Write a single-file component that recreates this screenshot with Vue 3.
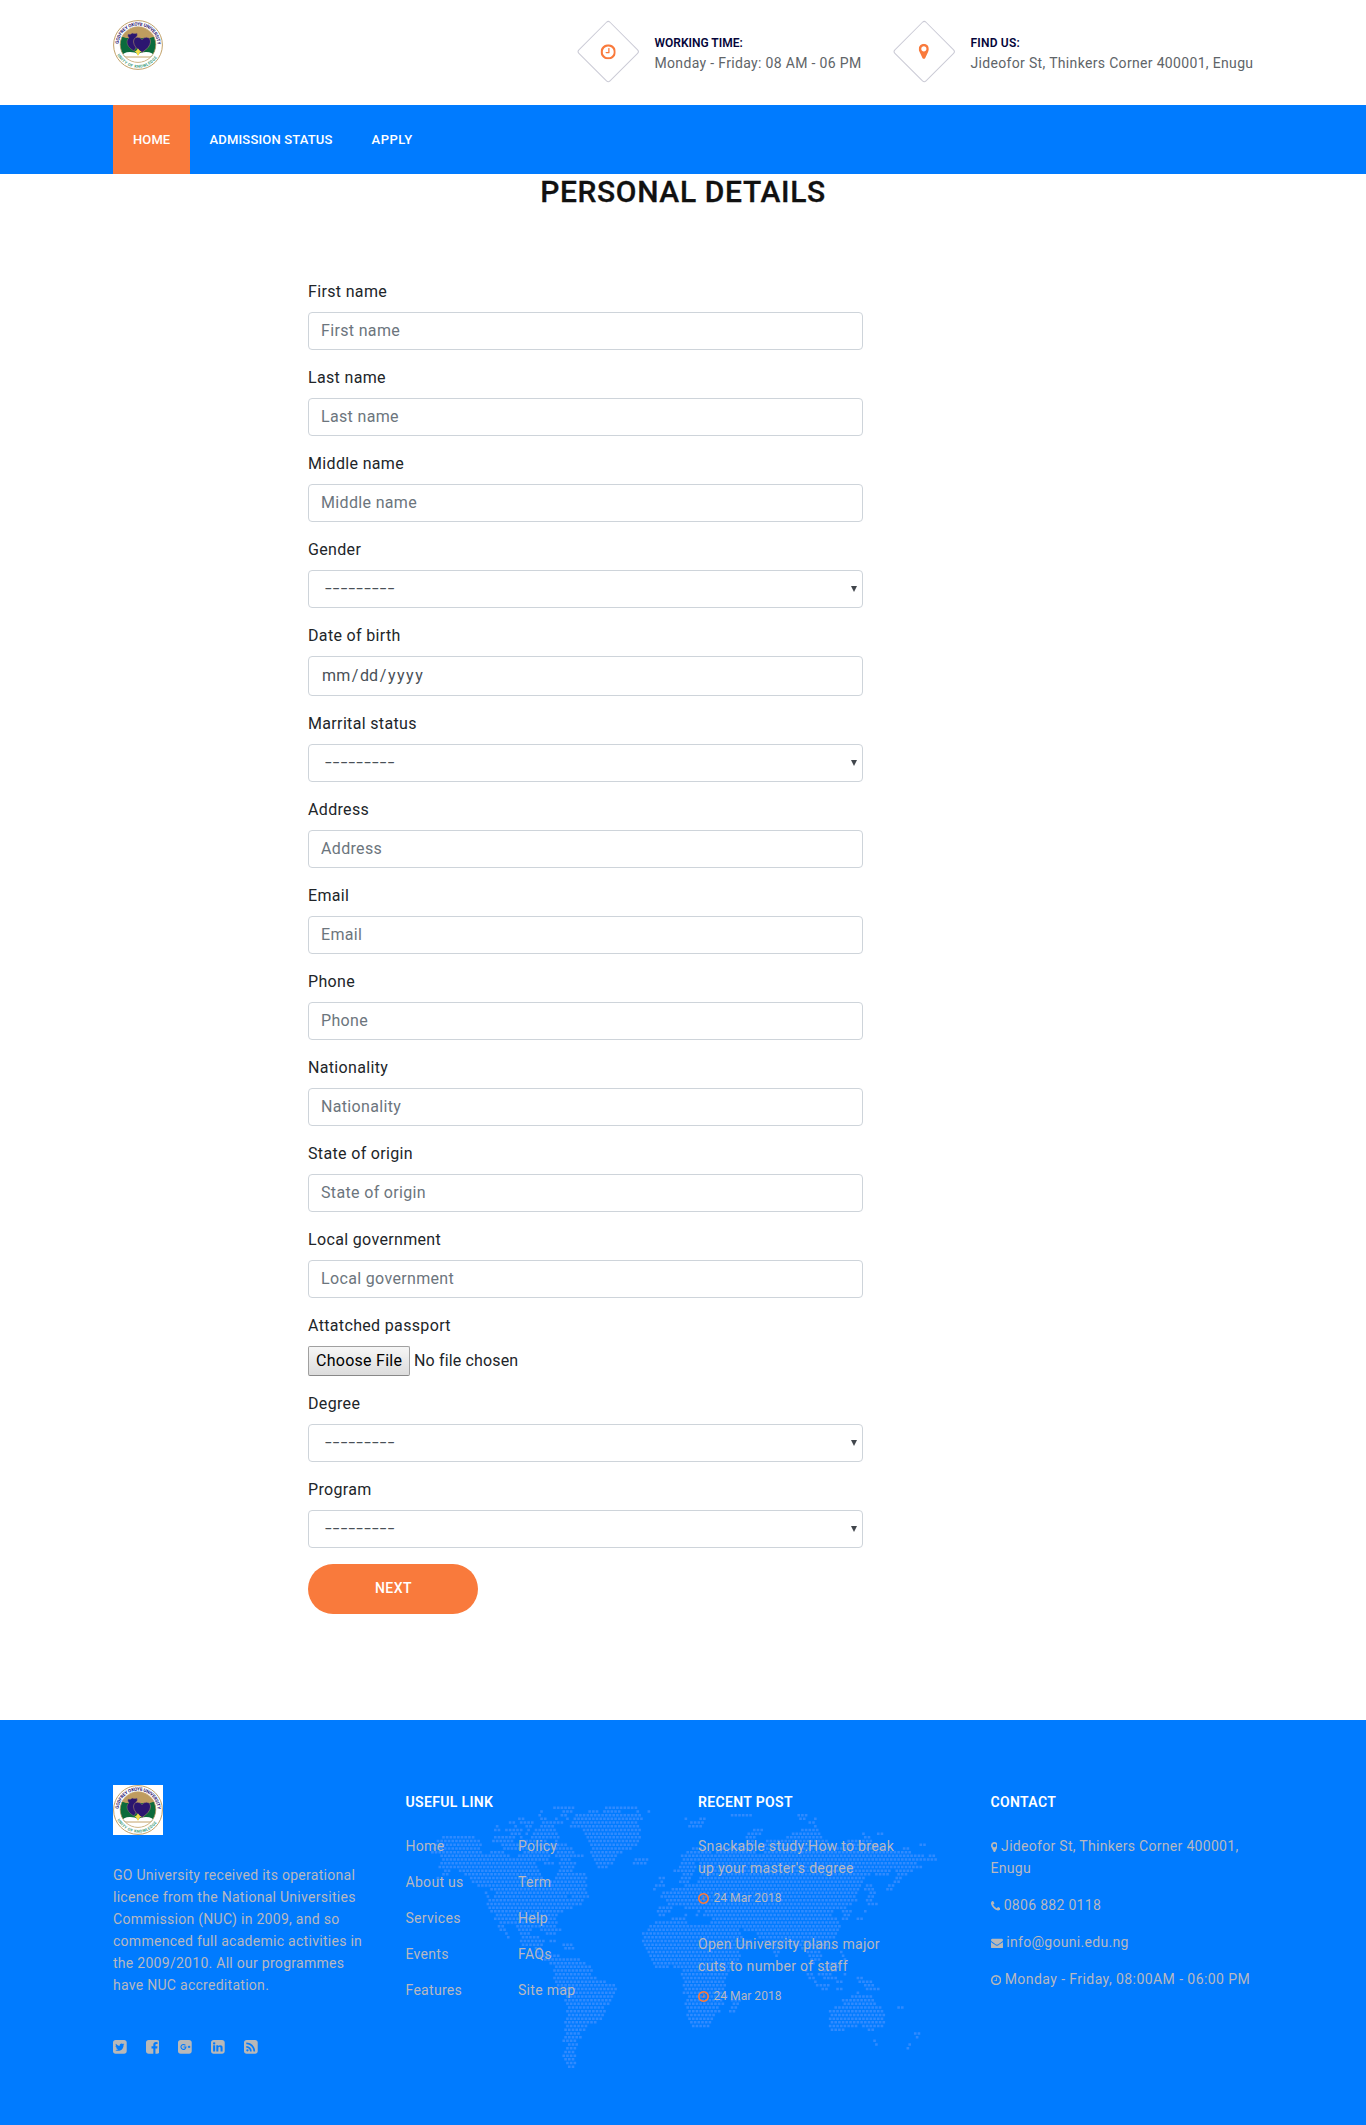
<script setup>
import { h } from 'vue'

const SQUARE = 'v960q0 119-84.5 203.5t-203.5 84.5h-960q-119 0-203.5-84.5t-84.5-203.5v-960q0-119 84.5-203.5t203.5-84.5h960q119 0 203.5 84.5t84.5 203.5z'
const icons = {
  clock: ['128 128 1536 1536', 'M1024 544v448q0 14-9 23t-23 9h-320q-14 0-23-9t-9-23v-64q0-14 9-23t23-9h224v-352q0-14 9-23t23-9h64q14 0 23 9t9 23zm416 352q0-148-73-273t-198-198-273-73-273 73-198 198-73 273 73 273 198 198 273 73 273-73 198-198 73-273zm224 0q0 209-103 385.5t-279.5 279.5-385.5 103-385.5-103-279.5-279.5-103-385.5 103-385.5 279.5-279.5 385.5-103 385.5 103 279.5 279.5 103 385.5z'],
  pin: ['384 128 1024 1536', 'M1152 640q0-106-75-181t-181-75-181 75-75 181 75 181 181 75 181-75 75-181zm256 0q0 109-33 179l-364 774q-16 33-47.5 52t-67.5 19-67.5-19-46.5-52l-365-774q-33-70-33-179 0-212 150-362t362-150 362 150 150 362z'],
  phone: ['192 128 1408 1536', 'M1600 1240q0 27-10 70.5t-21 68.5q-21 50-122 106-94 51-186 51-27 0-53-3.5t-57.5-12.5-47-14.5-55.5-20.5-49-18q-98-35-175-83-127-79-264-216t-216-264q-48-77-83-175-3-9-18-49t-20.5-55.5-14.5-47-12.5-57.5-3.5-53q0-92 51-186 56-101 106-122 25-11 68.5-21t70.5-10q14 0 21 3 18 6 53 76 11 19 30 54t35 63.5 31 53.5q3 4 17.5 25t21.5 35.5 7 28.5q0 20-28.5 50t-62 55-62 53-28.5 46q0 9 5 22.5t8.5 20.5 14 24 11.5 19q76 137 174 235t235 174q2 1 19 11.5t24 14 20.5 8.5 22.5 5q18 0 46-28.5t53-62 55-62 50-28.5q14 0 28.5 7t35.5 21.5 25 17.5q25 15 53.5 31t63.5 35 54 30q70 35 76 53 3 7 3 21z'],
  mail: ['0 128 1792 1536', 'M1792 710v794q0 66-47 113t-113 47h-1472q-66 0-113-47t-47-113v-794q44 49 101 87 362 246 497 345 57 42 92.5 65.5t94.5 48 110 24.5h2q51 0 110-24.5t94.5-48 92.5-65.5q170-123 498-345 57-39 100-87zm0-294q0 79-49 151t-122 123q-376 261-468 325-10 7-42.5 31t-54 38.5-52 32.5-57.5 27-50 9h-2q-23 0-50-9t-57.5-27-52-32.5-54-38.5-42.5-31q-91-64-262-182.5t-205-142.5q-62-42-117-115.5t-55-136.5q0-78 41.5-130t118.5-52h1472q65 0 112.5 47t47.5 113z'],
  twitter: ['128 128 1536 1536', 'M1408 610q-56 25-121 34 68-40 93-117-65 38-134 51-61-66-153-66-87 0-148.5 61.5t-61.5 148.5q0 29 5 48-129-7-242-65t-192-155q-29 50-29 106 0 114 91 175-47-1-100-26v2q0 75 50 133.5t123 72.5q-29 8-51 8-13 0-39-4 21 63 74.5 104t121.5 42q-116 90-261 90-26 0-50-3 148 94 322 94 112 0 210-35.5t168-95 120.5-137 75-162 24.5-168.5q0-18-1-27 63-45 105-109zm256-194' + SQUARE],
  facebook: ['128 128 1536 1536', 'M1376 128q119 0 203.5 84.5t84.5 203.5v960q0 119-84.5 203.5t-203.5 84.5h-188v-595h199l30-232h-229v-148q0-56 23.5-84t91.5-28l122-1v-207q-63-9-178-9-136 0-217.5 80t-81.5 226v171h-200v232h200v595h-532q-119 0-203.5-84.5t-84.5-203.5v-960q0-119 84.5-203.5t203.5-84.5h960z'],
  google: ['128 128 1536 1536', 'M1664 416' + SQUARE],
  linkedin: ['128 128 1536 1536', 'M365 1414h231v-694h-231v694zm246-908q-1-52-36-86t-93-34-94.5 34-36.5 86q0 51 35.5 85.5t92.5 34.5h1q59 0 95-34.5t36-85.5zm585 908h231v-398q0-154-73-233t-193-79q-136 0-209 117h2v-101h-231q3 66 0 694h231v-388q0-38 7-56 15-35 45-59.5t74-24.5q116 0 116 157v371zm468-998' + SQUARE],
  rss: ['128 128 1536 1536', 'M640 1280q0-53-37.5-90.5t-90.5-37.5-90.5 37.5-37.5 90.5 37.5 90.5 90.5 37.5 90.5-37.5 37.5-90.5zm351 94q-13-232-177-396t-396-177q-14-1-24 9t-10 23v128q0 13 8.5 22t21.5 10q154 11 264 121t121 264q1 13 10 21.5t22 8.5h128q13 0 23-10t9-24zm384 1q-5-154-56-297.5t-139.5-260-205-205-260-139.5-297.5-56q-14-1-23 9-10 10-10 23v128q0 13 9 22t22 10q204 7 378 111.5t278.5 278.5 111.5 378q1 13 10 22t22 9h128q13 0 23-10 11-9 9-23zm289-959' + SQUARE],
}

const Icon = ({ name }) => {
  const [viewBox, d] = icons[name]
  const kids = [h('path', { d, fill: 'currentColor' })]
  if (name === 'google') {
    kids.push(h('path', {
      d: 'M960 730a280 280 0 1 0 60 190h-270M1370 760v270M1235 895h270',
      fill: 'none', stroke: '#007bff', 'stroke-width': 120,
    }))
  }
  return h('svg', { viewBox, height: '.857em', width: Number(viewBox.split(' ')[2]) / 1792 + 'em' }, kids)
}

const Seal = () => h('svg', { viewBox: '0 0 50 50', width: 50, height: 50 }, [
  h('defs', [
    h('path', { id: 'sealTop', d: 'M5.6 25a19.4 19.4 0 0 1 38.8 0' }),
    h('path', { id: 'sealBottom', d: 'M2.7 30a22.9 22.9 0 0 0 44.6 0' }),
    h('clipPath', { id: 'sealClip' }, [h('circle', { cx: 25, cy: 24.6, r: 17.8 })]),
  ]),
  h('rect', { width: 50, height: 50, fill: '#fff' }),
  h('circle', { cx: 25, cy: 25, r: 24.4, fill: '#fff', stroke: '#c2a26a', 'stroke-width': 1 }),
  h('g', { 'clip-path': 'url(#sealClip)' }, [
    h('rect', { width: 50, height: 50, fill: '#bf9c5f' }),
    h('path', { d: 'M0 18q7-3 13 0h24q7-3 13 0v19H0z', fill: '#0b6b3c' }),
    h('path', { d: 'M8 37q2-5 9-5 5 0 8 2 3-2 8-2 7 0 9 5v13H8z', fill: '#fff' }),
    h('path', { d: 'M10 37h30', stroke: '#c2a26a', 'stroke-width': 1 }),
  ]),
  h('circle', { cx: 25, cy: 24.6, r: 17.8, fill: 'none', stroke: '#c2a26a', 'stroke-width': 0.7 }),
  h('path', { d: 'M21 31q-7-4-7-9 0-3 2-4-2-2-1-4 3 1 4-1 3 1 5 0 1 3-1 4 4 6-2 14z', fill: '#2c1670', stroke: '#a98a6a', 'stroke-width': 0.4 }),
  h('path', { d: 'M29 32.500q-8-5-8.500-10.500 0-4.500 4-4.800 3 0 4.500 2.400 1.500-2.400 4.500-2.400 4 .3 4 4.800-.5 5.500-8.500 10.500z', fill: '#2c1670', stroke: '#a98a6a', 'stroke-width': 0.6 }),
  h('path', { d: 'M21.500 31.500q2-.5 3.500-3 1.500 2.500 3.500 3l-2.500 1.800v2h-2v-2z', fill: '#f3dc4a' }),
  h('text', { fill: '#2c1670', 'font-size': 4.6, 'font-weight': 700, 'font-family': 'Roboto, sans-serif' },
    [h('textPath', { href: '#sealTop', textLength: 59, startOffset: 1 }, 'GODFREY OKOYE UNIVERSITY')]),
  h('text', { fill: '#3a9a78', 'font-size': 4, 'font-weight': 700, 'font-family': 'Roboto, sans-serif' },
    [h('textPath', { href: '#sealBottom', textLength: 48, startOffset: 5 }, 'UNITY OF KNOWLEDGE')]),
])

const fields = [
  { label: 'First name', type: 'text' },
  { label: 'Last name', type: 'text' },
  { label: 'Middle name', type: 'text' },
  { label: 'Gender', type: 'select' },
  { label: 'Date of birth', type: 'date' },
  { label: 'Marrital status', type: 'select' },
  { label: 'Address', type: 'text' },
  { label: 'Email', type: 'text' },
  { label: 'Phone', type: 'text' },
  { label: 'Nationality', type: 'text' },
  { label: 'State of origin', type: 'text' },
  { label: 'Local government', type: 'text' },
  { label: 'Attatched passport', type: 'file' },
  { label: 'Degree', type: 'select' },
  { label: 'Program', type: 'select' },
]

const links = [['Home', 'About us', 'Services', 'Events', 'Features'], ['Policy', 'Term', 'Help', 'FAQs', 'Site map']]
const posts = ["Snackable study:How to break up your master's degree", 'Open University plans major cuts to number of staff']
const contacts = [
  ['pin', 'Jideofor St, Thinkers Corner 400001, Enugu'],
  ['phone', '0806 882 0118'],
  ['mail', 'info@gouni.edu.ng'],
  ['clock', 'Monday - Friday, 08:00AM - 06:00 PM'],
]
const social = ['twitter', 'facebook', 'google', 'linkedin', 'rss']

// Dotted world map: one line per row of dots, each pair is a start-end span.
const land = `480-552 636-742
440-458 487-495 510-548 585-620 632-690 710-716 730-740 762-780
436-456 468-475 490-500 510-530 552-755 1022-1078 1090-1097 1218-1248
384-400 446-470 495-505 524-530 548-755 882-888 918-946 1222-1240 1268-1275
356-370 388-424 448-515 536-740 900-942 1250-1268
310-326 368-378 398-420 446-492 534-745 890-938 1262-1278
310-326 342-392 402-418 428-495 568-750 1088-1116 1226-1286
354-386 400-412 424-498 578-750 1072-1108 1205-1288 1408-1426 1452-1472
148-255 308-372 382-392 412-505 582-745 1062-1090 1178-1298 1418-1436
135-270 300-372 390-470 490-500 588-745 1062-1085 1125-1310 1370-1440
128-272 332-415 430-530 598-735 1030-1100 1120-1330 1345-1460 1586-1605
118-272 335-420 440-540 605-728 900-940 985-1085 1110-1480 1530-1550
122-272 295-345 400-470 495-548 598-690 880-965 975-1090 1120-1565
145-358 378-475 495-575 602-680 870-1600 1612-1632
150-475 505-545 610-672 725-775 870-945 955-1590 1595-1638
148-430 460-490 500-552 615-672 722-762 862-910 920-1575
142-445 502-550 622-655 862-912 925-1590
152-180 205-450 505-548 848-912 930-1500 1515-1565
148-175 215-452 500-580 868-905 925-1440 1455-1490 1515-1545
138-150 230-460 490-585 802-820 862-905 920-1420 1508-1530
235-585 806-820 865-900 920-1415 1505-1525
262-585 788-796 805-825 865-872 880-1410 1425-1440 1488-1515
300-585 782-790 812-822 840-1410 1420-1450 1486-1505
282-292 315-592 806-1400 1428-1450
280-300 310-530 538-600 810-1395 1425-1448
285-578 818-1395 1420-1440
288-570 825-1385 1430-1458
292-540 795-845 880-1370
300-520 798-835 915-925 935-1330 1350-1380 1418-1425
308-500 798-826 878-884 912-925 938-1325 1350-1375 1418-1425
312-500 834-886 960-1340 1350-1370 1395-1412
318-500 785-890 960-1345
322-340 372-500 772-1345
326-345 378-425 445-508 768-1040 1060-1345
335-352 388-420 460-500 755-1045 1095-1340
342-358 392-450 760-1055 1105-1330
388-460 470-495 752-1085 1120-1320
392-455 512-550 755-1080 1130-1175 1190-1310
425-455 522-550 760-1075 1135-1170 1230-1330
430-460 762-1050 1140-1165 1240-1290 1340-1360
440-505 768-1045 1150-1162 1250-1290 1345-1365
455-565 775-1040 1255-1285 1350-1365
470-588 780-1035 1245-1275 1300-1345
490-600 790-832 845-1020 1300-1340
488-605 870-1015 1235-1250 1295-1340
488-605 872-1010 1245-1265 1280-1320 1360-1370
488-612 878-1008 1250-1268 1290-1335 1345-1350 1390-1420
495-645 876-1005 1272-1280 1330-1352 1400-1448
500-675 878-1005 1275-1320 1412-1452
505-680 878-1005 1285-1315 1335-1360 1425-1470
515-678 878-1010 1390-1410
518-668 885-1010 1380-1445
522-658 882-1000 1015-1045 1352-1450
525-655 882-1000 1018-1045 1350-1455
528-645 880-985 1012-1040 1325-1470 1518-1538
528-645 888-985 1015-1035 1312-1475
528-635 888-975 1312-1478
524-630 892-968 1312-1482
522-615 895-965 1312-1482
520-595 902-955 1310-1395 1410-1475
520-580 1318-1365 1430-1455
518-570 1440-1448 1568-1585
516-568 1568-1585
516-560 1445-1460
532-560 1452-1458 1548-1565
526-555 1540-1560
518-555
516-558
514-550
520-558
526-556`
const STEP = 3.7
const mapPath = land.split('\n').map((row, k) => {
  const shift = (k % 2) * STEP / 2
  return row.split(' ').map((span) => {
    const [a, b] = span.split('-').map((n) => n / 3 - 30)
    let d = ''
    for (let i = Math.ceil((a - shift) / STEP); i * STEP + shift < b; i++) {
      d += `M${(i * STEP + shift).toFixed(2)} ${(k * STEP + 0.5).toFixed(2)}h2.6v2.500h-2.6z`
    }
    return d
  }).join('')
}).join('')
</script>

<template>
  <div class="page">
    <header class="top container">
      <a class="logo"><Seal /></a>
      <div class="info">
        <div class="info-item first">
          <span class="diamond"><i><Icon name="clock" /></i></span>
          <div class="info-text"><b class="wt">WORKING TIME:</b><span>Monday - Friday: 08 AM - 06 PM</span></div>
        </div>
        <div class="info-item">
          <span class="diamond"><i><Icon name="pin" /></i></span>
          <div class="info-text"><b>FIND US:</b><span>Jideofor St, Thinkers Corner 400001, Enugu</span></div>
        </div>
      </div>
    </header>

    <nav class="nav">
      <div class="container nav-row">
        <a class="active">HOME</a>
        <a class="status">ADMISSION STATUS</a>
        <a class="apply">APPLY</a>
      </div>
    </nav>

    <main>
      <h1>PERSONAL DETAILS</h1>
      <form class="form" @submit.prevent>
        <div v-for="f in fields" :key="f.label" class="group">
          <label>{{ f.label }}</label>
          <input v-if="f.type === 'text'" class="control" type="text" :placeholder="f.label">
          <div v-else-if="f.type === 'select'" class="control select">
            <span class="dashes">---------</span><span class="arrow"></span>
          </div>
          <div v-else-if="f.type === 'date'" class="control date">
            mm<span class="slash">/</span>dd<span class="slash">/</span><span class="year">yyyy</span>
          </div>
          <div v-else class="file"><span class="choose">Choose File</span><span>No file chosen</span></div>
        </div>
        <button class="next">NEXT</button>
      </form>
    </main>

    <footer class="footer">
      <svg class="map" width="530" height="266" viewBox="0 0 530 266"><path :d="mapPath" fill="#a0b0ff" fill-opacity=".3" /></svg>
      <div class="container cols">
        <section class="about">
          <a class="logo"><Seal /></a>
          <p>GO University received its operational licence from the National Universities Commission (NUC) in 2009, and so commenced full academic activities in the 2009/2010. All our programmes have NUC accreditation.</p>
          <div class="social"><Icon v-for="s in social" :key="s" :name="s" /></div>
        </section>
        <section>
          <h2>USEFUL LINK</h2>
          <div class="links">
            <ul v-for="(col, i) in links" :key="i"><li v-for="l in col" :key="l">{{ l }}</li></ul>
          </div>
        </section>
        <section>
          <h2>RECENT POST</h2>
          <article v-for="p in posts" :key="p">
            <p>{{ p }}</p>
            <div class="when"><Icon name="clock" /><span>24 Mar 2018</span></div>
          </article>
        </section>
        <section class="contact">
          <h2>CONTACT</h2>
          <p v-for="[icon, text] in contacts" :key="text" :class="icon"><span class="ico"><Icon :name="icon" /></span> {{ text }}</p>
        </section>
      </div>
    </footer>
  </div>
</template>

<style>
body { margin: 0; background: #fff; }
</style>

<style scoped>
.page { font-family: Roboto, "Open Sans", sans-serif; font-size: 14px; line-height: 22px; color: #212529; background: #fff; }
.page svg { display: inline-block; flex: none; }
.container { width: 1140px; margin: 0 auto; box-sizing: border-box; }
.logo { display: block; width: 50px; height: 50px; }
.logo svg { display: block; }
h1, h2, p, ul { margin: 0; padding: 0; font-weight: 400; list-style: none; }

.top { display: flex; justify-content: space-between; height: 105px; padding-top: 20px; }
.info { display: flex; width: 676px; }
.info-item { display: flex; width: 337px; }
.info-item.first { width: 316px; }
.diamond { width: 42.500px; height: 42.500px; margin: 9px 0 0 8.500px; border: 1px solid #cbcbd6; border-radius: 3px; transform: rotate(45deg); display: flex; align-items: center; justify-content: center; flex: none; }
.diamond i { transform: rotate(-45deg); font-size: 18px; line-height: 0; color: #f97a3c; }
.info-text { margin-left: 24.500px; padding-top: 13px; white-space: nowrap; color: #606468; letter-spacing: .33px; }
.info-text b { display: block; font-size: 12px; line-height: 20px; font-weight: 600; color: #05053a; letter-spacing: .2px; }
.info-text b.wt { letter-spacing: 0; }
.info-text span { display: block; line-height: 21px; }

.nav { background: #007bff; height: 69px; }
.nav-row { display: flex; }
.nav a { box-sizing: border-box; padding: 0 20px; line-height: 69px; font-size: 13px; font-weight: 500; color: #fff; letter-spacing: .1px; white-space: nowrap; }
.nav a.active { background: #f97a3c; width: 77px; }
.nav a.status { width: 162px; padding-left: 19.500px; letter-spacing: .17px; }
.nav a.apply { padding-left: 19.500px; letter-spacing: .55px; }

h1 { margin: 0 0 70px; padding-top: 0; height: 36px; line-height: 36px; text-align: center; font-size: 30px; font-weight: 500; color: #111; letter-spacing: .64px; -webkit-text-stroke: .3px #111; }
.form { width: 555px; margin-left: 308px; font-size: 16px; line-height: 24px; letter-spacing: .34px; }
.group { margin-bottom: 16px; }
label { display: block; margin-bottom: 8px; }
.control { display: block; box-sizing: border-box; width: 100%; height: 38px; padding: 5px 12px 7px; border: 1px solid #ced4da; border-radius: 4px; background: #fff; color: #495057; font: inherit; letter-spacing: inherit; }
.control::placeholder { color: #6c757d; opacity: 1; }
.select { display: flex; justify-content: space-between; align-items: center; padding: 0 5px 0 16px; }
.dashes { display: block; transform: scaleX(1.5); transform-origin: 0 50%; letter-spacing: .8px; }
.arrow { border: 3px solid transparent; border-top: 6px solid #41464c; border-bottom: 0; }
.date { height: 40px; padding: 7px 13px; letter-spacing: .1px; }
.slash { padding: 0 1.500px; }
.year { letter-spacing: 1.500px; }
.file { display: flex; height: 30px; line-height: 30px; letter-spacing: .15px; }
.choose { box-sizing: border-box; width: 102px; height: 30px; margin-right: 4px; padding-left: 7px; border: 1px solid #a0a0a0; border-bottom-color: #888; border-radius: 2px; background: linear-gradient(#f6f6f6, #dcdcdc); color: #000; line-height: 27px; letter-spacing: .27px; }
.next { display: block; width: 170px; height: 50px; padding: 0 0 2px 1px; border: 0; border-radius: 25px; background: #f97a3c; color: #fff; font: 500 14px/22px Roboto, sans-serif; letter-spacing: .45px; }

.footer { position: relative; box-sizing: border-box; height: 405px; margin-top: 106px; padding-top: 65px; background: #007bff; color: #b8b8c0; letter-spacing: .3px; }
.map { position: absolute; left: 420px; top: 86px; }
.cols { position: relative; display: grid; grid-template-columns: repeat(4, 292.500px); width: 1140px; }
.about p { width: 258px; margin-top: 29px; letter-spacing: .28px; }
.social { display: flex; gap: 19px; margin-top: 44px; font-size: 16px; color: #b8b8b8; }
h2 { height: 35px; margin-bottom: 15px; padding-top: 6px; box-sizing: border-box; font-size: 14px; line-height: 22px; font-weight: 600; color: #fff; letter-spacing: .35px; }
.links { display: flex; }
.links ul { width: 112.500px; }
.links li { margin-bottom: 14px; }
article p { width: 206px; }
.when { display: flex; align-items: center; gap: 4.500px; height: 18px; margin: 10px 0 26px; font-size: 12px; line-height: 18px; letter-spacing: .05px; }
.when svg { color: #f97a3c; width: 11px; height: 11px; }
.contact p { width: 260px; margin-bottom: 15px; }
.contact .clock { letter-spacing: .43px; white-space: nowrap; }
.ico { font-size: 12px; line-height: 0; }
.ico svg { vertical-align: -1.200px; color: #b8b8b8; }
</style>
